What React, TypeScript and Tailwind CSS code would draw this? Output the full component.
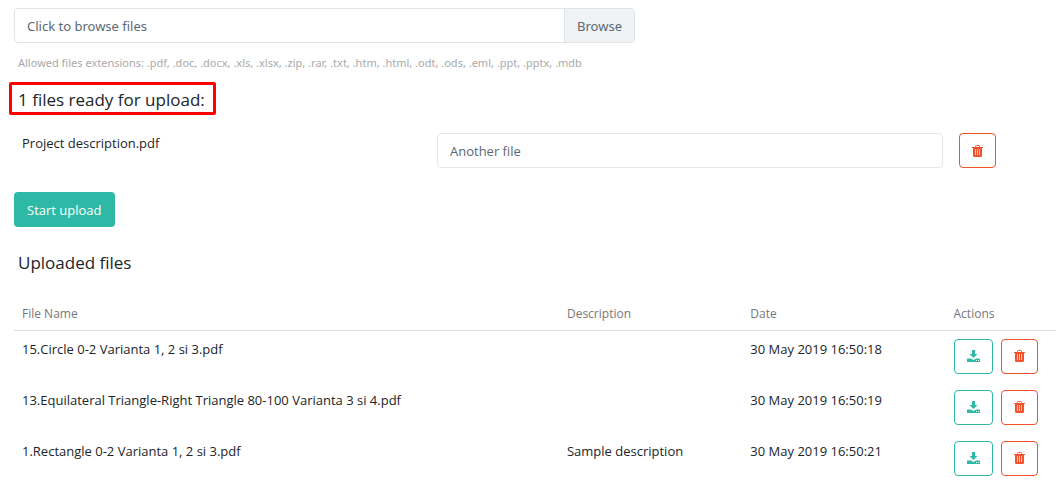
import React, { useState } from "react";

type UploadedFile = { name: string; description: string; date: string };

const uploaded: UploadedFile[] = [
  { name: "15.Circle 0-2 Varianta 1, 2 si 3.pdf", description: "", date: "30 May 2019 16:50:18" },
  { name: "13.Equilateral Triangle-Right Triangle 80-100 Varianta 3 si 4.pdf", description: "", date: "30 May 2019 16:50:19" },
  { name: "1.Rectangle 0-2 Varianta 1, 2 si 3.pdf", description: "Sample description", date: "30 May 2019 16:50:21" },
];

function TrashIcon() {
  return (
    <svg viewBox="0 0 11 12" className="h-3 w-[11px]" fill="none" stroke="currentColor" aria-hidden="true">
      <path d="M3.500 2V1.500Q3.500 .5 4.500 .5H6.500Q7.500 .5 7.500 1.500V2" />
      <path d="M0 2.500H11" />
      <path d="M1 3H10V10.500Q10 12 8.500 12H2.500Q1 12 1 10.500Z" fill="currentColor" stroke="none" />
      <path d="M3.500 4V10M5.500 4V10M7.500 4V10" stroke="white" strokeOpacity="0.65" />
    </svg>
  );
}

function DownloadIcon() {
  return (
    <svg viewBox="0 0 13 12" className="h-3 w-[13px]" fill="currentColor" aria-hidden="true">
      <path d="M5 0H8V4H10.500L6.500 8L2.500 4H5Z" />
      <path fillRule="evenodd" d="M.5 8.500H4L6.500 10L9 8.500H12.500Q13 8.500 13 9V11.500Q13 12 12.500 12H.5Q0 12 0 11.500V9Q0 8.500 .5 8.500ZM9 10V11H10V10ZM11 10V11H12V10Z" />
    </svg>
  );
}

function DeleteButton({ label }: { label: string }) {
  return (
    <button type="button" aria-label={label} className="flex h-[35px] w-[37px] shrink-0 items-center justify-center rounded border border-[#f2512c] text-[#f2512c]">
      <TrashIcon />
    </button>
  );
}

export default function App() {
  const [description, setDescription] = useState("Another file");
  return (
    <main className="bg-white pt-2 pl-3.5 font-['Open_Sans','Noto_Sans',sans-serif] text-[13px] leading-5 text-[#212529]">
      <label className="flex h-[35px] w-[621px] max-w-full cursor-pointer overflow-hidden rounded border border-[#e1e4e6] font-['Noto_Sans',sans-serif] text-[13px] text-[#5c6873]">
        <input type="file" multiple className="sr-only" />
        <span className="flex flex-1 items-center px-3">Click to browse files</span>
        <span className="flex items-center border-l border-[#e1e4e6] bg-[#f0f3f5] px-3">Browse</span>
      </label>
      <p className="mt-2.5 pl-1 font-['Noto_Sans',sans-serif] text-[11px] text-[#aaaaaa]">
        Allowed files extensions: .pdf, .doc, .docx, .xls, .xlsx, .zip, .rar, .txt, .htm, .html, .odt, .ods, .eml, .ppt, .pptx, .mdb
      </p>
      <h2 className="mt-[9px] -ml-[5px] flex h-[33px] w-[207px] items-center rounded-xs border-3 border-[#ff0000] pt-0.5 pl-1.5 text-[17px] whitespace-nowrap">
        1 files ready for upload:
      </h2>
      <div className="mt-[18px] grid grid-cols-[399fr_506fr_auto] items-start gap-x-4 pr-[60px] pl-2">
        <span>Project description.pdf</span>
        <input
          type="text"
          aria-label="File description"
          value={description}
          onChange={(e) => setDescription(e.target.value)}
          className="h-[35px] w-full rounded border border-[#e4e7ea] px-3 text-[13px] text-[#5c6873]"
        />
        <DeleteButton label="Remove Project description.pdf" />
      </div>
      <button type="button" className="mt-6 flex h-[35px] items-center rounded bg-[#2eb8a6] px-[13px] text-[13px] text-white">
        Start upload
      </button>
      <h2 className="mt-6 pl-1 text-[17px] leading-6">Uploaded files</h2>
      <table className="mt-6 w-full table-fixed border-collapse text-left">
        <thead className="border-b border-[#dddddd] text-xs text-[#777777]">
          <tr className="h-[31px]">
            <th className="w-[52.3%] px-2 font-normal">File Name</th>
            <th className="w-[17.6%] px-2 font-normal">Description</th>
            <th className="w-[19.5%] px-2 font-normal">Date</th>
            <th className="px-2 font-normal">Actions</th>
          </tr>
        </thead>
        <tbody>
          {uploaded.map((file) => (
            <tr key={file.name} className="align-top">
              <td className="p-2">{file.name}</td>
              <td className="p-2">{file.description}</td>
              <td className="p-2">{file.date}</td>
              <td className="p-2">
                <div className="flex gap-2">
                  <button type="button" aria-label={`Download ${file.name}`} className="flex h-[35px] w-[39px] shrink-0 items-center justify-center rounded border border-[#2eb8a6] text-[#2eb8a6]">
                    <DownloadIcon />
                  </button>
                  <DeleteButton label={`Delete ${file.name}`} />
                </div>
              </td>
            </tr>
          ))}
        </tbody>
      </table>
    </main>
  );
}
